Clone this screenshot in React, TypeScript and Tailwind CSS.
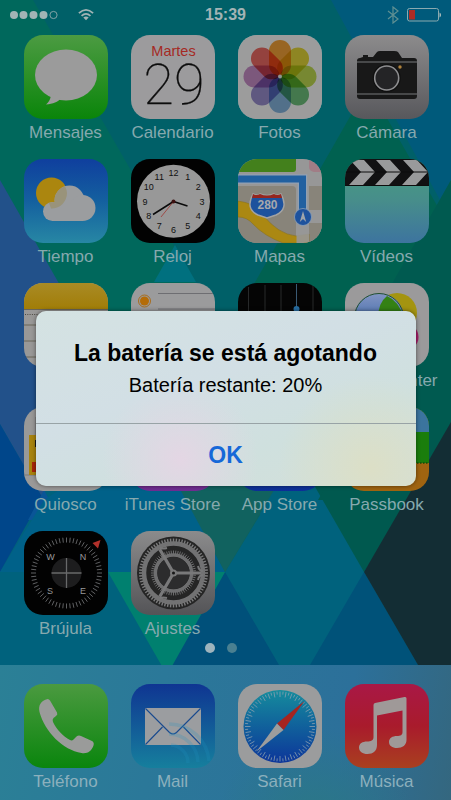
import type { ReactNode } from "react";

type AppItem = { name: string; icon: ReactNode; captionless?: boolean };

function Art({ children }: { children: ReactNode }) {
  return (
    <svg viewBox="0 0 84 84" className="block h-full w-full" aria-hidden="true">
      {children}
    </svg>
  );
}

function Gradient({ id, from, to, mid }: { id: string; from: string; to: string; mid?: string }) {
  return (
    <>
      <linearGradient id={id} x1="0" y1="0" x2="0" y2="1">
        <stop offset="0" stopColor={from} />
        {mid && <stop offset="0.5" stopColor={mid} />}
        <stop offset="1" stopColor={to} />
      </linearGradient>
      <rect width="84" height="84" fill={`url(#${id})`} />
    </>
  );
}

function ticks(count: number, cx: number, cy: number, inner: number, outer: number, long?: number) {
  return Array.from({ length: count }, (_, i) => {
    const a = (i * 2 * Math.PI) / count;
    const start = long !== undefined && i % 2 === 0 ? long : inner;
    return (
      <line
        key={i}
        x1={cx + start * Math.sin(a)}
        y1={cy - start * Math.cos(a)}
        x2={cx + outer * Math.sin(a)}
        y2={cy - outer * Math.cos(a)}
      />
    );
  });
}

const Messages = (
  <Art>
    <Gradient id="messages" from="#4c9b42" to="#0a850a" />
    <ellipse cx="42" cy="40" rx="31" ry="25.5" fill="#9b9b9b" />
    <path d="M27 58 C27 64 25 67 22 69.5 C29 69 34 67 37 63Z" fill="#9b9b9b" />
  </Art>
);

const Calendar = (
  <Art>
    <rect width="84" height="84" fill="#9c9b9d" />
    <text x="42.500" y="21" textAnchor="middle" fontSize="14.500" fill="#a52a24">Martes</text>
    <text x="43" y="69" textAnchor="middle" fontSize="56" fill="#0c0c0c" stroke="#0c0c0c" strokeWidth="0.300" className="font-[Roboto,sans-serif] font-thin">29</text>
  </Art>
);

const petals = ["#f9a63a", "#e8dc3a", "#c3de52", "#70c47e", "#86b8e2", "#9c90d2", "#cb90cb", "#f26c66"];
const Photos = (
  <Art>
    <g className="isolate">
      <rect width="84" height="84" fill="#fff" />
      {petals.map((c, i) => (
        <rect key={c} x="31" y="5" width="22" height="36" rx="11" fill={c} transform={`rotate(${i * 45} 42 41.500)`} className="mix-blend-multiply" />
      ))}
      <circle cx="42" cy="41.500" r="2" fill="#e6f4ee" />
    </g>
    <rect width="84" height="84" fill="#000" opacity="0.390" />
  </Art>
);

const Camera = (
  <Art>
    <Gradient id="camera" from="#8c8b8c" to="#58585c" />
    <path d="M18 22v-2h5v2h5l4-5q1-1 3-1h14q3 0 4 1l4 6h12q3 0 3 3v35q0 3-3 3H15q-3 0-3-3V26q0-3 3-3z" fill="#181818" />
    <path d="M12 27h60M12 59h60" stroke="#77787b" strokeWidth="1" />
    <circle cx="41.700" cy="43" r="14" fill="#101010" />
    <circle cx="41.700" cy="43" r="12" fill="#242426" stroke="#8d8d8f" strokeWidth="1.600" />
    <circle cx="55" cy="32" r="1.700" fill="#b0823a" />
  </Art>
);

const Weather = (
  <Art>
    <Gradient id="weather" from="#0f3f9e" mid="#14609f" to="#2787a4" />
    <circle cx="27.500" cy="34" r="15.500" fill="#ab860f" />
    <g fill="#9b9d9f">
      <circle cx="45.500" cy="41.500" r="15" />
      <circle cx="28.500" cy="52.500" r="9.500" />
      <circle cx="58.500" cy="49" r="13" />
      <rect x="28" y="45" width="31" height="17" />
    </g>
    <path d="M36.500 29.500A15 15 0 0 0 30.800 43.500 A9.500 9.500 0 0 0 25 44 L27 49.500A15.500 15.500 0 0 0 43 34 15.500 15.500 0 0 0 41 27.500 Q38 28 36.500 29.500Z" fill="#99937a" />
  </Art>
);

const Clock = (
  <Art>
    <rect width="84" height="84" fill="#020202" />
    <circle cx="42.500" cy="42.300" r="36.500" fill="#989898" />
    <g fontSize="9" fill="#111" textAnchor="middle">
      {Array.from({ length: 12 }, (_, i) => {
        const a = ((i + 1) * Math.PI) / 6;
        return (
          <text key={i} x={42.5 + 28.5 * Math.sin(a)} y={45.5 - 28.5 * Math.cos(a)}>
            {i + 1}
          </text>
        );
      })}
    </g>
    <path d="M42.500 42.500 56.500 47M42.500 42.500 22 55.500" stroke="#0a0a0a" strokeWidth="1.500" />
    <path d="M42.500 42.500 30 58" stroke="#a02a24" strokeWidth="0.700" />
    <circle cx="42.500" cy="42.500" r="2" fill="#3c1010" />
  </Art>
);

const Maps = (
  <Art>
    <rect width="84" height="84" fill="#979797" />
    <path d="M0 0H58V10Q58 13 55 13H0Z" fill="#43801c" />
    <path d="M71 0H84V13H76Q71 12 71 8Z" fill="#a17d86" />
    <path d="M0 27H54Q58 27 58 31V84H0ZM71 27H84V51H71ZM71 64H84V84H71Z" fill="#88847a" />
    <path d="M0 42Q17 44 25 56Q40 75 58 77L71 75V84H45Q26 77 15 65Q9 58 0 58Z" fill="#ab8812" stroke="#8b731f" strokeWidth="0.600" />
    <path d="M58.500 27V84H71V27" fill="#979797" opacity="0.900" />
    <path d="M0 20H64.500V57" fill="none" stroke="#92a0b2" strokeWidth="9.500" />
    <path d="M0 20H64.500V57" fill="none" stroke="#2160a0" strokeWidth="7" />
    <circle cx="65" cy="58" r="8.500" fill="#1e529d" stroke="#8ba0b8" strokeWidth="0.800" />
    <path d="M65 52l3.200 11-3.200-3-3.200 3z" fill="#9fa4aa" />
    <path d="M15 35q4 2 7 0 7 3 14 0 3 2 7 0 8 15-5 21l-9 3-9-3Q7 50 15 35Z" fill="#1d529d" stroke="#a3a3a3" strokeWidth="1.400" />
    <path d="M15 35q4 2 7 0 7 3 14 0 3 2 7 0l1 4H14Z" fill="#95261f" />
    <text x="29.500" y="50" textAnchor="middle" fontSize="12" fontWeight="700" fill="#a6a8ac">280</text>
  </Art>
);

const Videos = (
  <Art>
    <Gradient id="videos" from="#47a07f" mid="#478d8b" to="#3d749f" />
    <rect width="84" height="27" fill="#111112" />
    {[5, 31, 58].map((x) => (
      <path key={x} d={`M${x} 1H${x + 14}L${x + 25} 13 ${x + 13} 26H${x - 1}L${x + 11} 13Z`} fill="#999a9b" />
    ))}
    <path d="M0 13H84M0 26.500H84" stroke="#0d0d0d" strokeWidth="1" />
  </Art>
);

const Notes = (
  <Art>
    <rect width="84" height="84" fill="#999897" />
    <linearGradient id="notes" x1="0" y1="0" x2="0" y2="1">
      <stop offset="0" stopColor="#a98b25" />
      <stop offset="1" stopColor="#a17d08" />
    </linearGradient>
    <rect width="84" height="26" fill="url(#notes)" />
    <path d="M0 26.500H84M0 42H84M0 58H84M0 74H84" stroke="#5e5849" strokeWidth="0.800" />
    <path d="M1 31.500H84" stroke="#4d4a43" strokeWidth="1" strokeDasharray="1 1.300" />
  </Art>
);

const Reminders = (
  <Art>
    <rect width="84" height="84" fill="#9b9b9c" />
    <path d="M27 10.500H84M27 26H84M27 42H84M27 58H84" stroke="#626267" strokeWidth="0.800" />
    <circle cx="13.500" cy="18" r="6" fill="none" stroke="#a9680f" strokeWidth="0.900" />
    <circle cx="13.500" cy="18" r="4.500" fill="#b46c08" />
    <circle cx="13.500" cy="34" r="6" fill="#2460a0" />
  </Art>
);

const Stocks = (
  <Art>
    <rect width="84" height="84" fill="#050505" />
    <path d="M10.500 4V84M27 2V84M43 2V84M75 3V84" stroke="#303234" strokeWidth="0.800" />
    <path d="M58.500 1V84" stroke="#3a5a74" strokeWidth="1" />
    <circle cx="58.500" cy="26" r="3" fill="#266ca0" />
  </Art>
);

const GameCenter = (
  <Art>
    <rect width="84" height="84" fill="#9b9a9b" />
    <linearGradient id="bubble" x1="0" y1="0" x2="0" y2="1">
      <stop offset="0" stopColor="#8395c3" />
      <stop offset="1" stopColor="#19539c" />
    </linearGradient>
    <circle cx="52" cy="30" r="20" fill="#a49410" />
    <circle cx="34" cy="35" r="25" fill="url(#bubble)" />
    <path d="M33 35Q33 20 42 13 54 18 59 35z" fill="#348114" />
    <circle cx="34" cy="35" r="24.500" fill="none" stroke="#24502c" strokeWidth="1" />
    <circle cx="60" cy="54" r="13.500" fill="#a51e68" />
  </Art>
);

const Newsstand = (
  <Art>
    <rect width="84" height="84" fill="#9a9998" />
    <rect x="11" y="10" width="60" height="40" fill="#858585" />
    <path d="M0 68H84" stroke="#7b7b7b" strokeWidth="1" />
    <rect x="5" y="28" width="34" height="40" fill="#a8830e" />
    <rect x="11" y="33" width="14" height="7" fill="#191919" />
    <rect x="8" y="55" width="14" height="10" fill="#a8260b" />
  </Art>
);

const ITunes = (
  <Art>
    <Gradient id="itunes" from="#a0287a" to="#6f2d92" />
  </Art>
);

const AppStore = (
  <Art>
    <Gradient id="appstore" from="#1671a4" to="#0d2f99" />
  </Art>
);

const Passbook = (
  <Art>
    <rect width="84" height="84" fill="#a06410" />
    <rect width="84" height="56" fill="#1a7d0c" />
    <rect width="84" height="25" fill="#3b749e" />
    <path d="M0 56H84" stroke="#124c09" strokeWidth="1.500" strokeDasharray="1.500 1.500" />
  </Art>
);

const Compass = (
  <Art>
    <rect width="84" height="84" fill="#020202" />
    <g stroke="#77797b" strokeWidth="0.800">{ticks(60, 42.5, 42, 30.5, 35.5)}</g>
    <circle cx="42.500" cy="42" r="15" fill="#1d1d1e" />
    <path d="M42.500 27V57M27.500 42H57.500" stroke="#68696a" strokeWidth="1.300" />
    <g fontSize="9" fill="#98999a" textAnchor="middle">
      <text x="26.500" y="29">W</text>
      <text x="59" y="29">N</text>
      <text x="26" y="63">S</text>
      <text x="59" y="63">E</text>
    </g>
    <path d="M68.500 12 76.500 9 74 17.500Z" fill="#b2312b" />
  </Art>
);

const Settings = (
  <Art>
    <Gradient id="settings" from="#8b8b8c" to="#545457" />
    <circle cx="42.500" cy="42" r="36.500" fill="#252525" />
    <g stroke="#7c7c7d" strokeWidth="1.400">{ticks(72, 42.5, 42, 31, 34.5)}</g>
    <circle cx="42.500" cy="42" r="29.500" fill="none" stroke="#727273" strokeWidth="4.500" />
    <g stroke="#6c6c6d" strokeWidth="1">{ticks(60, 42.5, 42, 19, 22.500)}</g>
    <circle cx="42.500" cy="42" r="18" fill="none" stroke="#6f6f70" strokeWidth="3.500" />
    <circle cx="42.500" cy="42" r="16" fill="#2c2c2d" />
    <g stroke="#79797a" strokeWidth="3.200">
      <path d="M42.500 42H70M42.500 42 28.700 18.200M42.500 42 28.700 65.800" />
    </g>
    <g fill="none" stroke="#777778" strokeWidth="2">
      <path d="M67 35q1 5 5 5M67 49q1-5 5-5M36 17q-4 1-7 0M36 67q-4-1-7 0" />
    </g>
    <circle cx="42.500" cy="42" r="3.500" fill="#79797a" />
    <circle cx="42.500" cy="42" r="1.500" fill="#151515" />
  </Art>
);

const Phone = (
  <Art>
    <Gradient id="phone" from="#4b9a40" to="#0a850d" />
    <path d="M22 15.500q2.500-1.500 4 1l7 12q1 2-1 3.500l-2.500 2q-1.500 1.500-.500 4c4 8 10 14 17 18q2 1 3.500-.500l3-3q2-1.500 4.500-.500l11 5q2.500 1.500 1.500 4.500c-2 6-6.500 8.500-12 7.500C39 66 21 48 15.500 28 14 21 17 17.500 22 15.500Z" fill="#9a9b9a" />
  </Art>
);

const Mail = (
  <Art>
    <Gradient id="mail" from="#0f3592" to="#167f9d" />
    <rect x="14" y="24" width="56" height="37" rx="1" fill="#9b9da0" />
    <path d="M14.500 24.500 38.500 48.500Q42 51.500 45.500 48.500L69.500 24.500M14.500 60.500 31.500 43M69.500 60.500 52.500 43" fill="none" stroke="#194a8e" strokeWidth="1.100" />
    <g fill="none" stroke="#1f93bd" strokeWidth="3.500" opacity="0.220">
      <path d="M40 61A18 18 0 0 1 57 79M38 50A29 29 0 0 1 67 78M38 40A40 40 0 0 1 78 77" />
    </g>
  </Art>
);

const Safari = (
  <Art>
    <rect width="84" height="84" fill="#9b9c9d" />
    <linearGradient id="safari" x1="0" y1="0" x2="0" y2="1">
      <stop offset="0" stopColor="#158c9d" />
      <stop offset="1" stopColor="#0c359a" />
    </linearGradient>
    <circle cx="42" cy="42.500" r="36.500" fill="url(#safari)" />
    <g stroke="#8ba0b0" strokeWidth="0.800">{ticks(72, 42, 42.5, 32, 35, 29.5)}</g>
    <path d="M66.500 17 39 39.500 45.500 46Z" fill="#a62420" />
    <path d="M18.500 67.500 39 39.500 45.500 46Z" fill="#9d9d9d" />
  </Art>
);

const Music = (
  <Art>
    <Gradient id="music" from="#a91846" mid="#a91b2c" to="#a9401f" />
    <path d="M30 19 59.500 13q2-.5 2 1.500V56c0 5-4 8-9.500 8-5 0-8-2.500-8-6 0-4 3.500-6 8-6 3.500 0 5.500-1 5.500-4V26.500L32 31.500V61c0 6-4 9-9.500 9-5 0-8.500-2.500-8.500-6.500 0-4 3.500-6 8-6 4 0 6.500-1 6.500-4.500V21q0-1.700 1.500-2Z" fill="#9f9998" />
  </Art>
);

const apps: AppItem[] = [
  { name: "Mensajes", icon: Messages },
  { name: "Calendario", icon: Calendar },
  { name: "Fotos", icon: Photos },
  { name: "Cámara", icon: Camera },
  { name: "Tiempo", icon: Weather },
  { name: "Reloj", icon: Clock },
  { name: "Mapas", icon: Maps },
  { name: "Vídeos", icon: Videos },
  { name: "Notas", icon: Notes, captionless: true },
  { name: "Recordatorios", icon: Reminders, captionless: true },
  { name: "Bolsa", icon: Stocks, captionless: true },
  { name: "Game Center", icon: GameCenter },
  { name: "Quiosco", icon: Newsstand },
  { name: "iTunes Store", icon: ITunes },
  { name: "App Store", icon: AppStore },
  { name: "Passbook", icon: Passbook },
  { name: "Brújula", icon: Compass },
  { name: "Ajustes", icon: Settings },
];

const dockApps: AppItem[] = [
  { name: "Teléfono", icon: Phone },
  { name: "Mail", icon: Mail },
  { name: "Safari", icon: Safari },
  { name: "Música", icon: Music },
];

function AppButton({ app, labelColor }: { app: AppItem; labelColor: string }) {
  return (
    <button type="button" aria-label={app.name} className="flex min-w-0 flex-col items-center gap-1">
      <span className="block size-[84px] overflow-hidden rounded-[19px]">{app.icon}</span>
      <span className={`h-5 text-[17px] leading-5 whitespace-nowrap ${labelColor}`}>{app.captionless ? null : app.name}</span>
    </button>
  );
}

function Wallpaper() {
  return (
    <svg viewBox="0 0 451 800" preserveAspectRatio="xMidYMin slice" className="absolute inset-0 h-full w-full" aria-hidden="true">
      <rect width="451" height="800" fill="#006068" />
      <path d="M0 0H33L195 282V430H0Z" fill="#00685c" />
      <path d="M0 180 57 280 140 430V520H0Z" fill="#22518a" />
      <path d="M368 85 451 230V430H170L331 150Z" fill="#006150" />
      <path d="M331 0H451V180L440 200Z" fill="#005a7b" />
      <path d="M451 180 393 282 310 425 451 440Z" fill="#005a50" />
      <path d="M175 245 196 282H154Z" fill="#00707f" />
      <path d="M0 424 42 497 108 380H360L451 530V800H0Z" fill="#00627d" />
      <path d="M0 424 42 497 0 572Z" fill="#00468a" />
      <path d="M28 520 44 490 60 520Z" fill="#0a5597" />
      <path d="M175 485H260V515L225 572Z" fill="#0d625d" />
      <path d="M44 500 150 430 225 572H0Z" fill="#006189" />
      <path d="M175 480H280L225 572Z" fill="#11625f" />
      <path d="M314 485H420L364 572Z" fill="#00594f" />
      <path d="M360 430H451L410 500H318Z" fill="#00594f" />
      <path d="M225 572 279 665H171Z" fill="#00507a" />
      <path d="M108 572H225L167 675Z" fill="#00806f" />
      <path d="M364 572 418 665H310Z" fill="#005279" />
      <path d="M451 422V665H418L364 572Z" fill="#132d34" />
    </svg>
  );
}

function StatusBar() {
  return (
    <header className="grid h-[35px] grid-cols-3 items-center px-2.5 pb-1.5 text-[#a2b4b5]">
      <div className="flex items-center gap-5">
        <svg width="48" height="10" viewBox="0 0 48 10" fill="currentColor" aria-label="Cobertura">
          <circle cx="4" cy="5" r="4" />
          <circle cx="13.500" cy="5" r="4" />
          <circle cx="23.500" cy="5" r="4" />
          <circle cx="33.500" cy="5" r="4" />
          <circle cx="43.500" cy="5" r="3.600" fill="none" stroke="currentColor" strokeWidth="0.800" />
        </svg>
        <svg width="16" height="13" viewBox="0 0 18 14" fill="none" stroke="currentColor" strokeWidth="2" aria-label="Wi-Fi">
          <path d="M1 5.500Q9-2 17 5.500M4 8.500Q9 4 14 8.500" />
          <path d="M9 13.500 6 10.500Q9 8 12 10.500Z" fill="currentColor" stroke="none" />
        </svg>
      </div>
      <time className="text-center text-[16px] leading-5 font-semibold">15:39</time>
      <div className="flex items-center justify-end gap-2">
        <svg width="12" height="18" viewBox="0 0 12 18" fill="none" stroke="#5f9093" strokeWidth="1.200" aria-label="Bluetooth">
          <path d="M1 5 11 13 6 17V1L11 5 1 13" />
        </svg>
        <svg width="34" height="14" viewBox="0 0 34 14" fill="none" aria-label="Batería">
          <rect x="0.500" y="0.500" width="31" height="12.500" rx="2" stroke="#8aaab0" />
          <path d="M32.500 4.500Q36 7 32.500 9.500Z" fill="#a0b5b6" />
          <rect x="2" y="2" width="6" height="9.500" fill="#ad2c25" />
        </svg>
      </div>
    </header>
  );
}

export default function App() {
  return (
    <div className="relative flex min-h-screen flex-col overflow-hidden bg-[#006068] font-['Liberation_Sans',Arial,sans-serif]">
      <Wallpaper />
      <div className="relative flex grow flex-col">
        <StatusBar />
        <main className="grid grid-cols-4 gap-y-4 pr-[11px] pl-3">
          {apps.map((app) => (
            <AppButton key={app.name} app={app} labelColor="text-[#86a9ae]" />
          ))}
        </main>
        <div className="flex grow items-start justify-center gap-3 pt-1 pr-2.5">
          <span className="size-2.5 rounded-full bg-[#9eb4bd]" />
          <span className="size-2.5 rounded-full bg-[#4a8091]" />
        </div>
        <nav className="grid grid-cols-4 bg-[radial-gradient(circle_at_70%_120%,#2b7884_0%,transparent_28%),linear-gradient(100deg,#2b8096_0%,#2b7899_35%,#2c709a_75%,#34677f_100%)] pt-[19px] pr-[11px] pb-2 pl-3" aria-label="Dock">
          {dockApps.map((app) => (
            <AppButton key={app.name} app={app} labelColor="text-[#8cb0bd]" />
          ))}
        </nav>
      </div>
      <div className="absolute inset-0 flex items-center justify-center px-[35px] pb-[3px]">
        <section
          role="alertdialog"
          aria-labelledby="alert-title"
          aria-describedby="alert-message"
          className="w-full max-w-[380px] overflow-hidden rounded-[10px] bg-[radial-gradient(circle_at_38%_85%,#e4d6e4_0%,transparent_28%),radial-gradient(circle_at_88%_90%,#dcdfc6_0%,transparent_25%),linear-gradient(160deg,#d4e2e2_0%,#d2dfe5_40%,#cfe0de_70%,#d3dfd9_100%)] text-center text-black shadow-[0_0_4px_#00000080]"
        >
          <div className="flex h-28 flex-col items-center gap-1 pt-7">
            <h1 id="alert-title" className="text-[23px] leading-7 font-bold whitespace-nowrap">La batería se está agotando</h1>
            <p id="alert-message" className="text-[20px] leading-7">Batería restante: 20%</p>
          </div>
          <button type="button" className="h-[63px] w-full border-t border-[#98a3a6] text-[23px] font-bold text-[#1668d8]">
            OK
          </button>
        </section>
      </div>
    </div>
  );
}
